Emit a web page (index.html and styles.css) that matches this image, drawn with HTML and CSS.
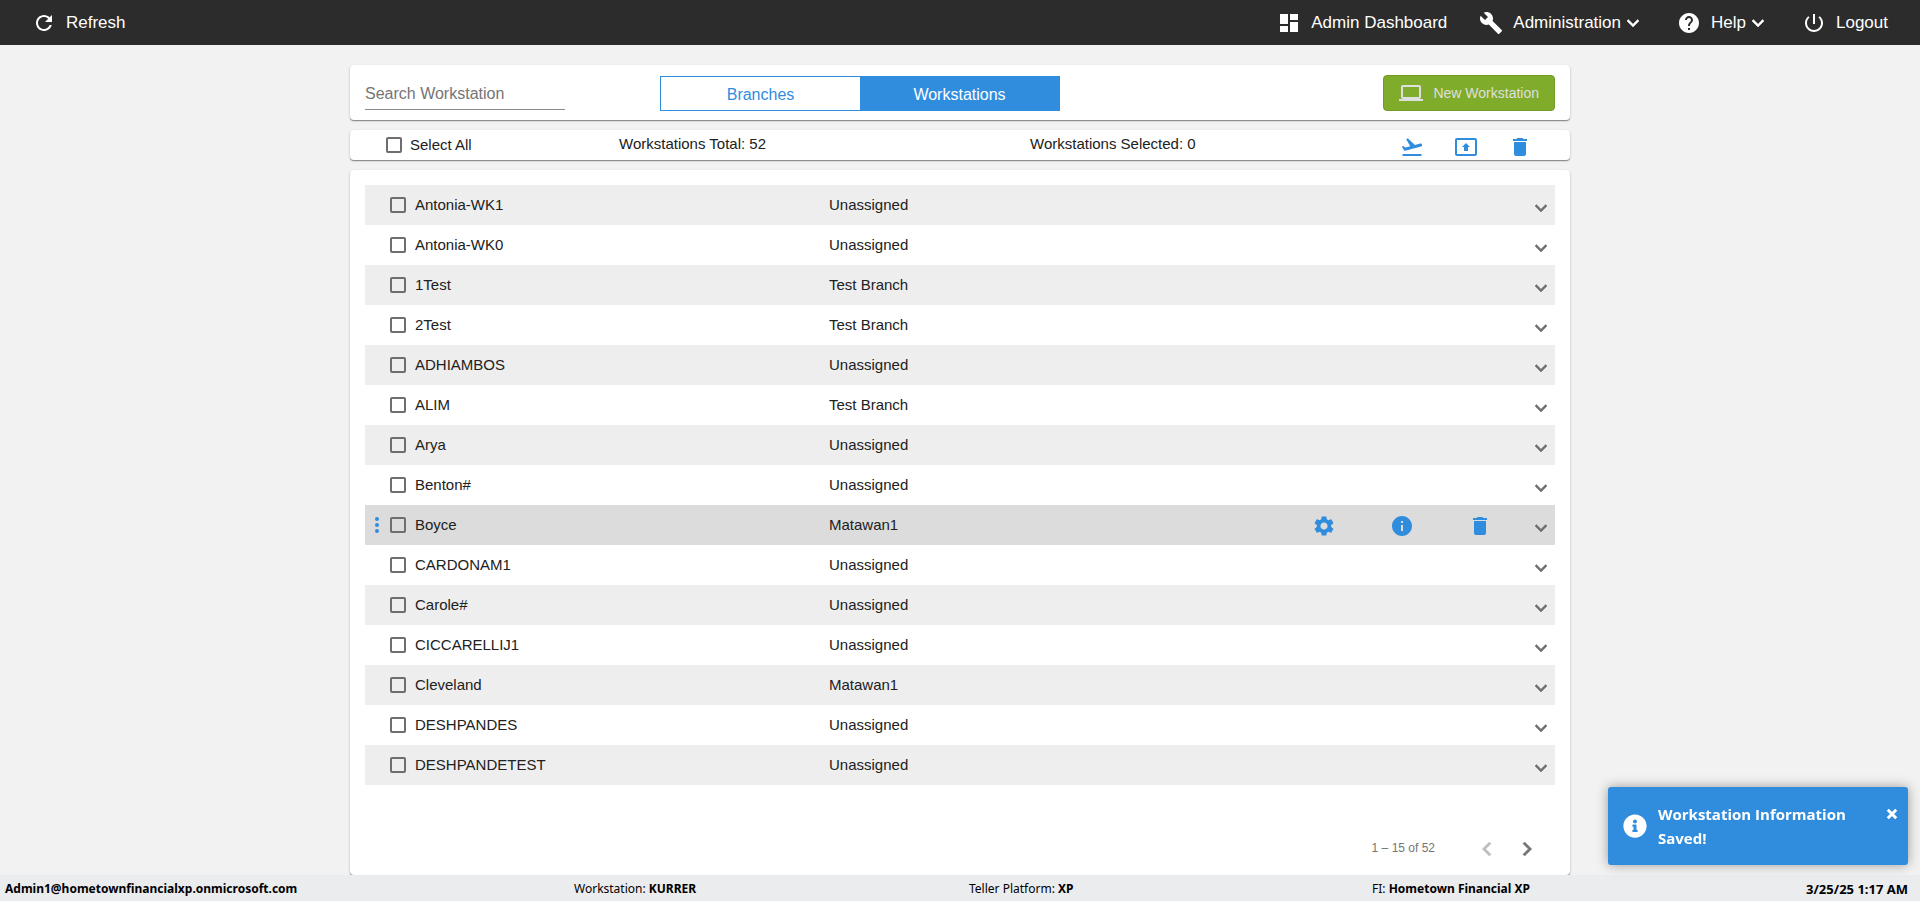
FILE: index.html
```html
<!DOCTYPE html>
<html lang="en">
<head>
<meta charset="utf-8">
<title>Workstations</title>
<link rel="stylesheet" href="styles.css">
</head>
<body>
<svg class="sprite" aria-hidden="true">
  <symbol id="chevron" viewBox="0 0 24 24"><path d="M7.41 8.59 12 13.17l4.59-4.58L18 10l-6 6-6-6z"/></symbol>
  <symbol id="trash" viewBox="0 0 24 24"><path d="M6 19c0 1.1.9 2 2 2h8c1.1 0 2-.9 2-2V7H6v12zM19 4h-3.500l-1-1h-5l-1 1H5v2h14V4z"/></symbol>
</svg>
<header class="topbar">
  <button class="nav-item" type="button">
    <svg class="icon" viewBox="0 0 24 24"><path d="M17.65 6.350C16.2 4.900 14.210 4 12 4c-4.420 0-7.990 3.580-7.990 8s3.570 8 7.990 8c3.730 0 6.840-2.550 7.730-6h-2.080c-.82 2.330-3.040 4-5.650 4-3.310 0-6-2.690-6-6s2.690-6 6-6c1.660 0 3.140.69 4.220 1.780L13 11h7V4l-2.350 2.350z"/></svg>
    <span>Refresh</span>
  </button>
  <nav class="nav">
    <a class="nav-item" href="#dashboard">
      <svg class="icon" viewBox="0 0 24 24"><path d="M3 13h8V3H3v10zm0 8h8v-6H3v6zm10 0h8V11h-8v10zm0-18v6h8V3h-8z"/></svg>
      <span>Admin Dashboard</span>
    </a>
    <button class="nav-item" type="button">
      <svg class="icon" viewBox="0 0 24 24"><path d="M22.7 19l-9.100-9.100c.9-2.300.4-5-1.500-6.900-2-2-5-2.400-7.400-1.300L9 6 6 9 1.600 4.700C.4 7.100.9 10.100 2.900 12.100c1.900 1.900 4.600 2.400 6.900 1.500l9.100 9.100c.4.4 1 .4 1.400 0l2.300-2.300c.5-.4.5-1.100.1-1.400z"/></svg>
      <span class="menu-label">Administration<svg class="icon bold" viewBox="0 0 24 24"><use href="#chevron"/></svg></span>
    </button>
    <button class="nav-item" type="button">
      <svg class="icon" viewBox="0 0 24 24"><path d="M12 2C6.480 2 2 6.480 2 12s4.480 10 10 10 10-4.480 10-10S17.520 2 12 2zm1 17h-2v-2h2v2zm2.070-7.750l-.9.92C13.450 12.900 13 13.500 13 15h-2v-.5c0-1.100.45-2.100 1.170-2.830l1.240-1.260c.37-.36.59-.86.59-1.410 0-1.100-.9-2-2-2s-2 .9-2 2H8c0-2.210 1.790-4 4-4s4 1.790 4 4c0 .88-.36 1.680-.93 2.250z"/></svg>
      <span class="menu-label">Help<svg class="icon bold" viewBox="0 0 24 24"><use href="#chevron"/></svg></span>
    </button>
    <a class="nav-item" href="#logout">
      <svg class="icon" viewBox="0 0 24 24"><path d="M13 3h-2v10h2V3zm4.830 2.170l-1.420 1.420C17.990 7.860 19 9.810 19 12c0 3.870-3.130 7-7 7s-7-3.130-7-7c0-2.190 1.010-4.140 2.580-5.420L6.170 5.170C4.230 6.820 3 9.260 3 12c0 4.970 4.030 9 9 9s9-4.030 9-9c0-2.740-1.230-5.180-3.170-6.830z"/></svg>
      <span>Logout</span>
    </a>
  </nav>
</header>

<main class="content">
  <section class="card toolbar">
    <input class="search" type="text" placeholder="Search Workstation" aria-label="Search Workstation">
    <div class="toggle">
      <button type="button" class="toggle-option">Branches</button>
      <button type="button" class="toggle-option active">Workstations</button>
    </div>
    <button type="button" class="new-button">
      <svg class="icon" viewBox="0 0 24 24"><path d="M20 18c1.100 0 1.990-.9 1.990-2L22 6c0-1.100-.9-2-2-2H4c-1.100 0-2 .9-2 2v10c0 1.100.9 2 2 2H0v2h24v-2h-4zM4 6h16v10H4V6z"/></svg>
      <span>New Workstation</span>
    </button>
  </section>

  <section class="card summary">
    <label class="check"><input type="checkbox"><span>Select All</span></label>
    <span class="total">Workstations Total: 52</span>
    <span class="selected">Workstations Selected: 0</span>
    <div class="bulk">
      <button type="button" class="icon-button" aria-label="Deploy"><svg class="icon" viewBox="0 0 24 24"><path d="M2.500 19h19v2h-19v-2zm19.570-9.360c-.21-.8-1.040-1.280-1.840-1.060L14.920 10l-6.900-6.430-1.930.51 4.140 7.170-4.970 1.330-1.970-1.540-1.450.39 2.590 4.490s7.120-1.900 16.570-4.430c.81-.23 1.280-1.050 1.070-1.850z"/></svg></button>
      <button type="button" class="icon-button" aria-label="Move to branch"><svg class="icon" viewBox="0 0 24 24"><path d="M21 3H3c-1.110 0-2 .89-2 2v14c0 1.100.89 2 2 2h18c1.110 0 2-.9 2-2V5c0-1.110-.89-2-2-2zm0 16.020H3V4.980h18v14.040zM10 12H8l4-4 4 4h-2v4h-4v-4z"/></svg></button>
      <button type="button" class="icon-button" aria-label="Delete selected"><svg class="icon" viewBox="0 0 24 24"><use href="#trash"/></svg></button>
    </div>
  </section>

  <section class="card list-card">
    <ul class="list" id="list"></ul>
    <div class="paginator">
      <span>1 – 15 of 52</span>
      <div class="pager">
        <button type="button" class="icon-button" aria-label="Previous page" disabled><svg class="bold" viewBox="0 0 24 24"><path d="M15.410 7.410 14 6l-6 6 6 6 1.410-1.410L10.830 12z"/></svg></button>
        <button type="button" class="icon-button" aria-label="Next page"><svg class="bold" viewBox="0 0 24 24"><path d="M10 6 8.590 7.410 13.170 12l-4.580 4.590L10 18l6-6z"/></svg></button>
      </div>
    </div>
  </section>
</main>

<footer class="statusbar">
  <strong class="user">Admin1@hometownfinancialxp.onmicrosoft.com</strong>
  <span>Workstation: <strong>KURRER</strong></span>
  <span>Teller Platform: <strong>XP</strong></span>
  <span>FI: <strong>Hometown Financial XP</strong></span>
  <strong class="date">3/25/25 1:17 AM</strong>
</footer>

<div class="toast" role="status">
  <svg class="toast-icon" viewBox="0 0 512 512"><path d="M256 8C119 8 8 119 8 256s111 248 248 248 248-111 248-248S393 8 256 8zm0 110c23 0 42 19 42 42s-19 42-42 42-42-19-42-42 19-42 42-42zm56 254c0 7-5 12-12 12h-88c-7 0-12-5-12-12v-24c0-7 5-12 12-12h12v-64h-12c-7 0-12-5-12-12v-24c0-7 5-12 12-12h64c7 0 12 5 12 12v100h12c7 0 12 5 12 12v24z"/></svg>
  <p>Workstation Information Saved!</p>
  <button type="button" class="toast-close" aria-label="Close"><svg viewBox="0 0 10 10"><path d="M1.500 1.500l7 7M8.500 1.500l-7 7"/></svg></button>
</div>
<script src="list.js"></script>
</body>
</html>
```
FILE: list.js
```js
const workstations = [
  ["Antonia-WK1", "Unassigned"],
  ["Antonia-WK0", "Unassigned"],
  ["1Test", "Test Branch"],
  ["2Test", "Test Branch"],
  ["ADHIAMBOS", "Unassigned"],
  ["ALIM", "Test Branch"],
  ["Arya", "Unassigned"],
  ["Benton#", "Unassigned"],
  ["Boyce", "Matawan1"],
  ["CARDONAM1", "Unassigned"],
  ["Carole#", "Unassigned"],
  ["CICCARELLIJ1", "Unassigned"],
  ["Cleveland", "Matawan1"],
  ["DESHPANDES", "Unassigned"],
  ["DESHPANDETEST", "Unassigned"]
];
const activeName = "Boyce";

const dots = `<svg class="dots" viewBox="0 0 4 16"><circle cx="2" cy="2" r="2"/><circle cx="2" cy="8" r="2"/><circle cx="2" cy="14" r="2"/></svg>`;
const actions = `
  <button type="button" class="icon-button" aria-label="Settings"><svg class="icon" viewBox="0 0 24 24"><path d="M19.140 12.940c.04-.3.06-.61.06-.94 0-.32-.02-.64-.07-.94l2.030-1.580c.18-.14.23-.41.12-.61l-1.920-3.320c-.12-.22-.37-.29-.59-.22l-2.390.96c-.5-.38-1.030-.7-1.620-.94l-.36-2.540c-.04-.24-.24-.41-.48-.41h-3.840c-.24 0-.43.17-.47.41l-.36 2.540c-.59.24-1.130.57-1.620.94l-2.390-.96c-.22-.08-.47 0-.59.22L2.740 8.870c-.12.21-.08.47.12.61l2.030 1.580c-.05.3-.09.63-.09.94s.02.64.07.94l-2.030 1.580c-.18.14-.23.41-.12.61l1.920 3.320c.12.22.37.29.59.22l2.390-.96c.5.38 1.030.7 1.620.94l.36 2.540c.05.24.24.41.48.41h3.840c.24 0 .44-.17.47-.41l.36-2.540c.59-.24 1.130-.56 1.620-.94l2.390.96c.22.08.47 0 .59-.22l1.920-3.320c.12-.22.07-.47-.12-.61l-2.010-1.580zM12 15.600c-1.980 0-3.600-1.620-3.600-3.600s1.620-3.600 3.600-3.600 3.600 1.620 3.600 3.600-1.620 3.600-3.600 3.600z"/></svg></button>
  <button type="button" class="icon-button" aria-label="Information"><svg class="icon" viewBox="0 0 24 24"><path d="M12 2C6.480 2 2 6.480 2 12s4.480 10 10 10 10-4.480 10-10S17.520 2 12 2zm1 15h-2v-6h2v6zm0-8h-2V7h2v2z"/></svg></button>
  <button type="button" class="icon-button" aria-label="Delete"><svg class="icon" viewBox="0 0 24 24"><use href="#trash"/></svg></button>`;

document.getElementById("list").innerHTML = workstations.map(([name, branch]) => {
  const active = name === activeName;
  return `<li class="row${active ? " active" : ""}">
    <span class="handle">${active ? dots : ""}</span>
    <label class="check"><input type="checkbox"><span>${name}</span></label>
    <span class="branch">${branch}</span>
    <div class="actions">${active ? actions : ""}</div>
    <button type="button" class="expand" aria-label="Expand ${name}"><svg class="icon bold" viewBox="0 0 24 24"><use href="#chevron"/></svg></button>
  </li>`;
}).join("");
```
FILE: styles.css
```css
* { box-sizing: border-box; }

body {
  margin: 0;
  height: 100vh;
  display: flex;
  flex-direction: column;
  overflow: hidden;
  background: #f2f2f2;
  color: #212121;
  font-family: "Liberation Sans", Arial, sans-serif;
  font-size: 15px;
  line-height: 20px;
}

button {
  margin: 0;
  padding: 0;
  border: 0;
  background: none;
  color: inherit;
  font: inherit;
}

svg { display: block; fill: currentColor; flex: none; }
.sprite { display: none; }
.icon { width: 24px; height: 24px; }
.bold { stroke: currentColor; stroke-width: 0.5; }

.topbar {
  flex: none;
  height: 45px;
  padding: 0 16px;
  display: flex;
  align-items: center;
  justify-content: space-between;
  background: #2c2c2c;
  color: #fff;
  font-size: 17px;
}
.nav { display: flex; }
.nav-item {
  display: flex;
  align-items: center;
  gap: 10px;
  padding: 0 16px;
  color: inherit;
  text-decoration: none;
}
.menu-label { display: flex; align-items: center; }

.content {
  flex: 1;
  min-height: 0;
  width: 100%;
  max-width: 1220px;
  margin: 0 auto;
  padding-top: 20px;
  display: flex;
  flex-direction: column;
  gap: 10px;
}

.card {
  background: #fff;
  border-radius: 4px;
  box-shadow: 0 1px 1px rgba(0, 0, 0, .4), 0 1px 3px rgba(0, 0, 0, .14);
}

.toolbar {
  flex: none;
  height: 55px;
  padding: 0 15px;
  display: grid;
  grid-template-columns: 295px 400px 1fr;
  align-items: center;
  font-size: 16px;
}
.search {
  width: 200px;
  height: 32px;
  padding: 0;
  border: 0;
  border-bottom: 1px solid #8a8a8a;
  outline: 0;
  font: inherit;
  align-self: end;
  margin-bottom: 10px;
}
.search::placeholder { color: #757575; opacity: 1; }
.toggle {
  display: flex;
  height: 35px;
  margin-top: 2px;
  border: 1px solid #308ddd;
}
.toggle-option { flex: 1; padding-top: 2px; color: #308ddd; }
.toggle-option.active { background: #308ddd; color: #fff; }
.new-button {
  justify-self: end;
  display: flex;
  align-items: center;
  gap: 10px;
  height: 36px;
  padding: 0 15px;
  border: 1px solid #719a26;
  border-radius: 4px;
  background: #80ac2c;
  color: #dfdfdf;
  font-size: 14px;
}

.summary {
  flex: none;
  height: 30px;
  display: grid;
  grid-template-columns: 233px 411px 1fr auto;
  align-items: center;
  padding: 0 38px 0 36px;
}
.total, .selected { padding-bottom: 2px; }
.check { display: flex; align-items: center; gap: 8px; }
.check input {
  appearance: none;
  width: 16px;
  height: 16px;
  margin: 0;
  border: 2px solid #6e6e6e;
  border-radius: 2px;
}
.bulk { display: flex; gap: 30px; color: #308ddd; padding-top: 4px; }

.list-card {
  flex: 1;
  min-height: 0;
  padding: 15px 15px 0;
  display: flex;
  flex-direction: column;
  justify-content: space-between;
}
.list { list-style: none; margin: 0; padding: 0; }
.row {
  height: 40px;
  display: grid;
  grid-template-columns: 25px 439px 1fr auto 26px;
  align-items: center;
}
.row .check { gap: 9px; }
.row:nth-child(odd) { background: #eee; }
.row.active { background: #dcdcdc; }
.handle { padding-left: 10px; color: #308ddd; }
.dots { width: 4px; height: 16px; }
.actions { display: flex; gap: 54px; margin-right: 37px; padding-top: 2px; color: #308ddd; }
.expand { padding-top: 5px; color: #6e6e6e; }

.paginator {
  display: flex;
  align-items: center;
  justify-content: flex-end;
  height: 54px;
  padding-right: 14px;
  color: #757575;
  font-size: 12px;
  gap: 38px;
}
.pager { display: flex; gap: 12px; padding-top: 2px; }
.pager svg { width: 28px; height: 28px; }
.pager button:disabled { color: #bdbdbd; }

.statusbar {
  flex: none;
  height: 26px;
  padding: 2px 12px 0 5px;
  display: grid;
  grid-template-columns: 569fr 395fr 403fr 434fr auto;
  align-items: center;
  background: #ebecee;
  color: #000;
  font-family: "Noto Sans", "Open Sans", sans-serif;
  font-size: 12px;
}
.date { font-size: 13px; }

.toast {
  position: fixed;
  right: 12px;
  bottom: 36px;
  width: 300px;
  min-height: 78px;
  padding: 15px 10px 15px 15px;
  display: flex;
  align-items: center;
  gap: 11px;
  border-radius: 3px;
  background: #308ddd;
  color: #fff;
  box-shadow: 0 0 12px #999;
  font: bold 15px/24px "Open Sans", "Noto Sans", sans-serif;
}
.toast p { margin: 0; flex: 1; }
.toast-icon { width: 24px; height: 24px; }
.toast-close { align-self: flex-start; padding: 6px 0; }
.toast-close svg { width: 12px; height: 12px; stroke: currentColor; stroke-width: 2.5; }
```
